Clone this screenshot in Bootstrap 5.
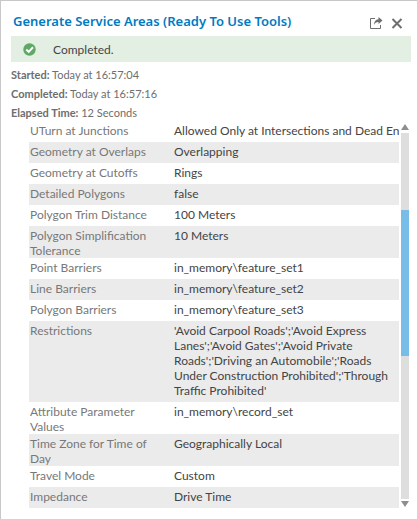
<!DOCTYPE html>
<html lang="en">
<head>
<meta charset="utf-8">
<meta name="viewport" content="width=device-width, initial-scale=1">
<title>Generate Service Areas</title>
<link href="https://cdn.jsdelivr.net/npm/bootstrap@5.3.0/dist/css/bootstrap.min.css" rel="stylesheet">
<style>
body { font-family: Lato, "Noto Sans", sans-serif; font-size: 12px; line-height: 15px; color: #444; background: #fff; }
.panel { min-height: 100vh; border-top: 1px solid #c8c8c8; border-left: 1px solid #c8c8c8; }
.panel-head { height: 35px; padding: 6px 14px 0 12px; }
.panel-title { font-family: "Noto Sans", sans-serif; font-size: 13px; line-height: 28px; font-weight: 600; color: #007ac2; }
.tool-btn { line-height: 0; }
.status { margin: 0 6px 0 10px; height: 26px; padding-left: 12px; gap: 17px; background: #e4efe4; }
.times { margin: 3px 0 0 10px; font-size: 11px; line-height: 19px; color: #6e6e6e; }
.results { margin: -1px 8px 0 28px; gap: 2px; }
.results-view { min-width: 0; }
.params { table-layout: fixed; line-height: 15px; }
.params th { width: 144px; padding: 2px 14px 0 1px; font-weight: 400; color: #787878; vertical-align: top; }
.params td { padding: 2px 8px 4px 1px; vertical-align: top; }
.params td.one-line { padding-right: 0; }
.params tr:nth-child(even) { background: #ebebeb; }
.scroller { width: 8px; padding-top: 3px; }
.scroll-btn { height: 7px; line-height: 0; }
.scroll-track { margin: 2px 0; padding-top: 77px; background: #dedede; }
.scroll-thumb { height: 146px; background: #78bde8; }
</style>
<script src="https://cdn.jsdelivr.net/npm/bootstrap@5.3.0/dist/js/bootstrap.bundle.min.js"></script>
</head>
<body>
<main class="panel overflow-hidden">
  <header class="panel-head d-flex align-items-start">
    <h1 class="panel-title mb-0 me-auto text-nowrap">Generate Service Areas (Ready To Use Tools)</h1>
    <div class="d-flex gap-2 pt-2">
      <button type="button" class="tool-btn btn p-0 border-0 rounded-0" aria-label="Open in new window">
        <svg width="13" height="15" viewBox="0 0 13 15" fill="none"><path d="M5 3.500H.5V13.500H10.500V10" stroke="#6e6e6e"/><path d="M8.500 2L12.500 5.500L8.500 9V7C6 7 5 8 4 10C4 6.500 5.500 4.400 8.500 4.200Z" fill="#6e6e6e"/></svg>
      </button>
      <button type="button" class="tool-btn btn p-0 border-0 rounded-0" aria-label="Close">
        <svg width="12" height="15" viewBox="0 0 12 15" fill="none"><path d="M1.500 4L10.500 13M10.500 4L1.500 13" stroke="#6e6e6e" stroke-width="2"/></svg>
      </button>
    </div>
  </header>
  <div class="status d-flex align-items-center" role="status">
    <svg width="13" height="13" viewBox="0 0 13 13" aria-hidden="true"><circle cx="6.500" cy="6.500" r="6.200" fill="#5fa866"/><path d="M3.300 6.500L5.700 8.900L10 4.300" fill="none" stroke="#fff" stroke-width="2"/></svg>
    <span>Completed.</span>
  </div>
  <div class="times">
    <div><strong>Started:</strong> Today at 16:57:04</div>
    <div><strong>Completed:</strong> Today at 16:57:16</div>
    <div><strong>Elapsed Time:</strong> 12 Seconds</div>
  </div>
  <div class="results d-flex">
    <div class="results-view flex-grow-1 overflow-hidden">
      <table class="params w-100">
        <tbody>
          <tr><th scope="row">UTurn at Junctions</th><td class="one-line text-nowrap overflow-hidden">Allowed Only at Intersections and Dead Ends</td></tr>
          <tr><th scope="row">Geometry at Overlaps</th><td>Overlapping</td></tr>
          <tr><th scope="row">Geometry at Cutoffs</th><td>Rings</td></tr>
          <tr><th scope="row">Detailed Polygons</th><td>false</td></tr>
          <tr><th scope="row">Polygon Trim Distance</th><td>100 Meters</td></tr>
          <tr><th scope="row">Polygon Simplification Tolerance</th><td>10 Meters</td></tr>
          <tr><th scope="row">Point Barriers</th><td>in_memory\feature_set1</td></tr>
          <tr><th scope="row">Line Barriers</th><td>in_memory\feature_set2</td></tr>
          <tr><th scope="row">Polygon Barriers</th><td>in_memory\feature_set3</td></tr>
          <tr><th scope="row">Restrictions</th><td>'Avoid Carpool Roads';'Avoid Express Lanes';'Avoid Gates';'Avoid Private Roads';'Driving an Automobile';'Roads Under Construction Prohibited';'Through Traffic Prohibited'</td></tr>
          <tr><th scope="row">Attribute Parameter Values</th><td>in_memory\record_set</td></tr>
          <tr><th scope="row">Time Zone for Time of Day</th><td>Geographically Local</td></tr>
          <tr><th scope="row">Travel Mode</th><td>Custom</td></tr>
          <tr><th scope="row">Impedance</th><td>Drive Time</td></tr>
        </tbody>
      </table>
    </div>
    <div class="scroller d-flex flex-column flex-shrink-0">
      <button type="button" class="scroll-btn btn p-0 border-0 rounded-0" aria-label="Scroll up"><svg class="d-block" width="8" height="7" viewBox="0 0 8 7"><path d="M4 0L8 6H0Z" fill="#8e8e8e"/></svg></button>
      <div class="scroll-track flex-grow-1"><div class="scroll-thumb"></div></div>
      <button type="button" class="scroll-btn btn p-0 border-0 rounded-0" aria-label="Scroll down"><svg class="d-block" width="8" height="7" viewBox="0 0 8 7"><path d="M0 0H8L4 6Z" fill="#8e8e8e"/></svg></button>
    </div>
  </div>
</main>
</body>
</html>
